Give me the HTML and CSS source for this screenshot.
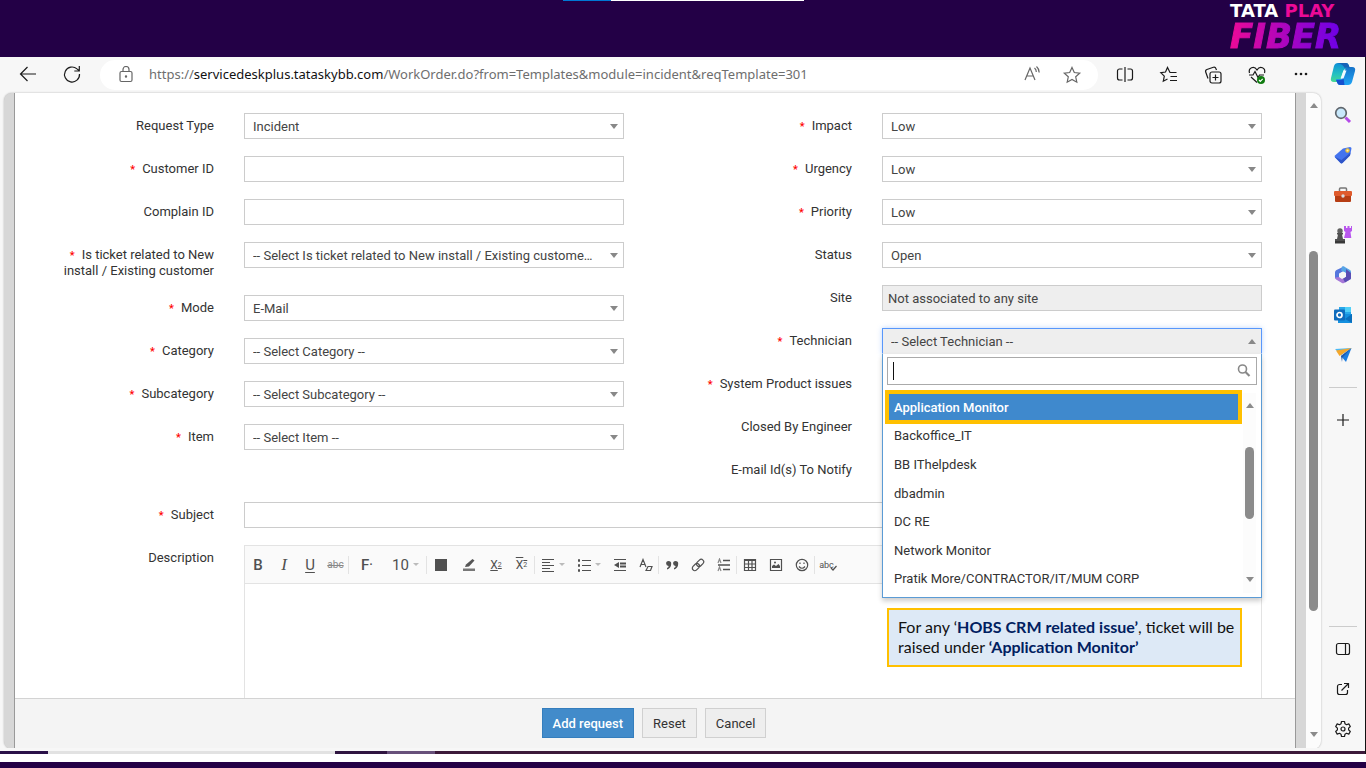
FILE: index.html
```html
<!DOCTYPE html>
<html lang="en">
  <head>
    <meta charset="UTF-8" />
    <meta name="viewport" content="width=device-width, initial-scale=1.0" />
    <title>ServiceDesk Plus - New Incident</title>
    <link rel="stylesheet" href="styles.css">
  </head>
  <body>
    <header class="banner">
      <div class="brand">
        <div class="brand-top">TATA <span>PLAY</span></div>
        <div class="brand-bottom">FIBER</div>
      </div>
    </header>

    <div class="browser">
      <nav class="toolbar">
        <button class="tool" aria-label="Back">
          <svg width="20" height="20" viewBox="0 0 20 20"><path d="M18 9H2.500M9.500 2 2.500 9l7 7" /></svg>
        </button>
        <button class="tool" aria-label="Refresh">
          <svg width="20" height="20" viewBox="0 0 20 20"><path d="M17.500 9A7.500 7.500 0 1 1 15 3.900L17 5.500M17.300 1v5h-5" /></svg>
        </button>
        <div class="address">
          <svg width="18" height="18" viewBox="0 0 18 18"><rect x="3" y="5.500" width="12" height="10" rx="1.500" /><path d="M6 5.500V3.500a3 3 0 0 1 6 0v2" /><circle cx="9" cy="10.500" r=".6" /></svg>
          <div class="url">https://<b>servicedeskplus.tataskybb.com</b>/WorkOrder.do?from=Templates&amp;module=incident&amp;reqTemplate=301</div>
          <button aria-label="Read aloud">
            <svg width="20" height="20" viewBox="0 0 20 20"><path d="M3 15 8 3l5 12M4.700 11h6.600M12.500 3a5 5 0 0 1 1.800 4M14.500 1.500a8 8 0 0 1 2.700 6" /></svg>
          </button>
          <button aria-label="Add to favorites">
            <svg width="20" height="20" viewBox="0 0 20 20"><path d="m10 2.500 2.300 5 5.400.6-4 3.700 1.100 5.400L10 14.500l-4.800 2.700 1.100-5.400-4-3.700 5.400-.6z" /></svg>
          </button>
        </div>
        <button class="tool" aria-label="Split screen">
          <svg width="20" height="20" viewBox="0 0 20 20"><path d="M7.500 4H4.500a2 2 0 0 0-2 2v7a2 2 0 0 0 2 2h3M12.500 4h3a2 2 0 0 1 2 2v7a2 2 0 0 1-2 2h-3M10 2v15" /></svg>
        </button>
        <button class="tool" aria-label="Favorites">
          <svg width="20" height="20" viewBox="0 0 20 20"><path d="M17.500 7.500H11L8.500 2.500 6.500 7l-4.700.7 3.500 3.500-1 5L8.500 14M11.500 11.500H18M11 15.500h7" /></svg>
        </button>
        <button class="tool" aria-label="Collections">
          <svg width="20" height="20" viewBox="0 0 20 20"><rect x="7" y="7" width="11" height="11" rx="2" /><path d="M12.500 9.500v6M9.500 12.500h6M5 13.500 2.700 7a2 2 0 0 1 1.200-2.500l6.500-2.200a2 2 0 0 1 2.500 1.200l.6 1.500" /></svg>
        </button>
        <button class="tool" aria-label="Browser essentials">
          <svg width="20" height="20" viewBox="0 0 20 20"><path d="M2.500 8C1 3 7 0 10 5c3-5 9-2 7.500 3M2 10h4l2-3.500 3 6 1.500-2.500H17M4 12l6 5.500" /><circle cx="14" cy="15" r="4" fill="#107c10" stroke="none" /><path d="m12 15 1.300 1.400 2.400-2.600" stroke="#fff" /></svg>
        </button>
        <button class="tool" aria-label="Settings and more">
          <svg width="20" height="20" viewBox="0 0 20 20"><g fill="#1b1b1b" stroke="none"><circle cx="5" cy="9" r="1.300" /><circle cx="10" cy="9" r="1.300" /><circle cx="15" cy="9" r="1.300" /></g></svg>
        </button>
        <button class="tool copilot" aria-label="Copilot">
          <svg width="26" height="26" viewBox="0 0 26 26">
            <defs>
              <linearGradient id="cp1" x1="0" y1="0" x2="0" y2="1"><stop offset="0" stop-color="#0d8ed8" /><stop offset=".6" stop-color="#25c2c0" /><stop offset="1" stop-color="#48d991" /></linearGradient>
              <linearGradient id="cp2" x1="0" y1="0" x2="0" y2="1"><stop offset="0" stop-color="#1673c9" /><stop offset="1" stop-color="#20a4f5" /></linearGradient>
            </defs>
            <g stroke="none">
              <path d="M8 1h8q2 0 2.700 2L20 7h-4q-2 0-2.700 2L11 17q-1 3-4 3H4q-4 0-3-4L4 4q1-3 4-3z" fill="url(#cp1)" />
              <path d="M18 23h-8q-2 0-2.700-2L6 17h4q2 0 2.700-2L15 8q1-3 4-3h3q4 0 3 4l-3 11q-1 3-4 3z" fill="url(#cp2)" />
              <path d="M8 1h8q2 0 2.700 2l1 3q-3-1-5 0-2-4-7-5z" fill="#1762b7" />
              <path d="M6 18h5q2 0 2.500-2l1 7H10q-2 0-2.700-2z" fill="#1650cf" />
              <path d="M13.500 8.500h3l-3 8h-3z" fill="#f2fbff" />
            </g>
          </svg>
        </button>
      </nav>

      <div class="workspace">
        <div class="page">
          <main class="content">
            <form class="request-form" id="requestForm">
              <div class="columns">
                <div class="column column-left">
                  <div class="row">
                    <label for="requestType">Request Type</label>
                    <div class="select"><select id="requestType"><option>Incident</option></select></div>
                  </div>
                  <div class="row">
                    <label for="customerId" class="required">Customer ID</label>
                    <input type="text" id="customerId" />
                  </div>
                  <div class="row">
                    <label for="complainId">Complain ID</label>
                    <input type="text" id="complainId" />
                  </div>
                  <div class="row">
                    <label for="ticketRelated" class="required">Is ticket related to New install / Existing customer</label>
                    <div class="select"><select id="ticketRelated"><option>-- Select Is ticket related to New install / Existing customer --</option></select></div>
                  </div>
                  <div class="row">
                    <label for="mode" class="required">Mode</label>
                    <div class="select"><select id="mode"><option>E-Mail</option></select></div>
                  </div>
                  <div class="row">
                    <label for="category" class="required">Category</label>
                    <div class="select"><select id="category"><option>-- Select Category --</option></select></div>
                  </div>
                  <div class="row">
                    <label for="subcategory" class="required">Subcategory</label>
                    <div class="select"><select id="subcategory"><option>-- Select Subcategory --</option></select></div>
                  </div>
                  <div class="row">
                    <label for="item" class="required">Item</label>
                    <div class="select"><select id="item"><option>-- Select Item --</option></select></div>
                  </div>
                </div>

                <div class="column column-right">
                  <div class="row">
                    <label for="impact" class="required">Impact</label>
                    <div class="select"><select id="impact"><option>Low</option></select></div>
                  </div>
                  <div class="row">
                    <label for="urgency" class="required">Urgency</label>
                    <div class="select"><select id="urgency"><option>Low</option></select></div>
                  </div>
                  <div class="row">
                    <label for="priority" class="required">Priority</label>
                    <div class="select"><select id="priority"><option>Low</option></select></div>
                  </div>
                  <div class="row">
                    <label for="status">Status</label>
                    <div class="select"><select id="status"><option>Open</option></select></div>
                  </div>
                  <div class="row">
                    <label for="site">Site</label>
                    <input type="text" id="site" class="readonly" value="Not associated to any site" readonly />
                  </div>
                  <div class="row">
                    <label for="technician" class="required">Technician</label>
                    <div class="select open">
                      <select id="technician"><option>-- Select Technician --</option></select>
                      <div class="dropdown">
                        <div class="search">
                          <input type="text" aria-label="Search technician" />
                          <svg width="14" height="14" viewBox="0 0 14 14"><circle cx="5.500" cy="5" r="4" /><path d="m8.500 8 4 4" stroke-width="2.200" /></svg>
                        </div>
                        <div class="list">
                          <ul>
                            <li class="selected">Application Monitor</li>
                            <li>Backoffice_IT</li>
                            <li>BB IThelpdesk</li>
                            <li>dbadmin</li>
                            <li>DC RE</li>
                            <li>Network Monitor</li>
                            <li>Pratik More/CONTRACTOR/IT/MUM CORP</li>
                          </ul>
                          <div class="list-scroll">
                            <span class="up"></span>
                            <span class="thumb"></span>
                            <span class="down"></span>
                          </div>
                        </div>
                      </div>
                      <div class="callout">For any ‘<b>HOBS CRM related issue’</b>, ticket will be raised under <b>‘Application Monitor’</b></div>
                    </div>
                  </div>
                  <div class="row">
                    <label for="productIssues" class="required">System Product issues</label>
                    <input type="text" id="productIssues" />
                  </div>
                  <div class="row">
                    <label for="closedBy">Closed By Engineer</label>
                    <input type="text" id="closedBy" />
                  </div>
                  <div class="row">
                    <label for="emailNotify">E-mail Id(s) To Notify</label>
                    <input type="text" id="emailNotify" />
                  </div>
                </div>
              </div>

              <div class="row">
                <label for="subject" class="required">Subject</label>
                <input type="text" id="subject" />
              </div>

              <div class="row description">
                <label for="description">Description</label>
                <div class="editor">
                  <div class="editor-bar">
                    <button type="button" class="bold" aria-label="Bold">B</button>
                    <button type="button" class="italic" aria-label="Italic">I</button>
                    <button type="button" class="underline" aria-label="Underline">U</button>
                    <button type="button" class="strike sep" aria-label="Strikethrough">abc</button>
                    <button type="button" class="bold wide" aria-label="Font">F<small>·</small></button>
                    <button type="button" class="size sep" aria-label="Font size">10<span class="caret"></span></button>
                    <button type="button" class="color" aria-label="Text color">
                      <svg width="14" height="14" viewBox="0 0 14 14"><path d="M1 1h12v12H1z" fill="#505050" stroke="none" /></svg>
                    </button>
                    <button type="button" class="color" aria-label="Highlight">
                      <svg width="14" height="14" viewBox="0 0 14 14"><path d="M1 10.500h12v2.500H1z" fill="#777" stroke="none" /><path d="M3 9 4 6.500 10.500 1l2 1.500L7 8.500z" fill="#555" stroke="none" /></svg>
                    </button>
                    <button type="button" class="script sub" aria-label="Subscript">X<sub>2</sub></button>
                    <button type="button" class="script sup sep" aria-label="Superscript">X<sup>2</sup></button>
                    <button type="button" class="wide" aria-label="Align">
                      <svg width="14" height="14" viewBox="0 0 14 14"><path d="M1 1.500h12M1 4.500h8M1 7.500h12M1 10.500h8M1 13.500h12" /></svg><span class="caret"></span>
                    </button>
                    <button type="button" class="wide" aria-label="List">
                      <svg width="14" height="14" viewBox="0 0 14 14"><path d="M5 2.500h9M5 7.500h9M5 12.500h9" /><path d="M1 2.500h2M1 7.500h2M1 12.500h2" stroke-width="2.500" /></svg><span class="caret"></span>
                    </button>
                    <button type="button" aria-label="Indent">
                      <svg width="14" height="14" viewBox="0 0 14 14"><path d="M1 1.500h12M1 12.500h12" /><path d="M7 5.500h6M7 8.500h6" stroke-width="2" /><path d="M1 7l5-3v6z" fill="#505050" stroke="none" /></svg>
                    </button>
                    <button type="button" class="sep" aria-label="Clear formatting">
                      <svg width="14" height="14" viewBox="0 0 14 14"><path d="M1 9 4 1.500 7 9M2 6.500h4M7 12.500l2-4h4l-1.500 4H7z" /></svg>
                    </button>
                    <button type="button" aria-label="Quote">
                      <svg width="14" height="14" viewBox="0 0 14 14"><path d="M3.500 3a2.700 2.700 0 0 1 2.700 2.800C6.200 9 4.500 11 2 11.500V10q1.500-.5 1.700-2A2.500 2.500 0 0 1 3.500 3zM10.500 3a2.700 2.700 0 0 1 2.700 2.800C13.200 9 11.500 11 9 11.500V10q1.500-.5 1.700-2a2.500 2.500 0 0 1-.2-5z" fill="#505050" stroke="none" /></svg>
                    </button>
                    <button type="button" aria-label="Link">
                      <svg width="14" height="14" viewBox="0 0 14 14"><g transform="rotate(-45 7 7)"><rect x="0" y="4.500" width="8" height="5" rx="2.500" /><rect x="6" y="4.500" width="8" height="5" rx="2.500" /></g></svg>
                    </button>
                    <button type="button" class="sep" aria-label="Line height">
                      <svg width="14" height="14" viewBox="0 0 14 14"><path d="m1 5 1.500-4L4 5M1 13l1.500-4L4 13" stroke="#888" /><path d="M6 2.500h7M1 7h12M6 11.500h7" stroke-width="1.500" /></svg>
                    </button>
                    <button type="button" aria-label="Table">
                      <svg width="14" height="14" viewBox="0 0 14 14"><path d="M1.500 1.500h11v11h-11zM5.500 2v11M9 2v11M1.500 6h11M1.500 9.500h11" /><path d="M1 2h12" stroke-width="2" /></svg>
                    </button>
                    <button type="button" aria-label="Image">
                      <svg width="14" height="14" viewBox="0 0 14 14"><path d="M1.500 1.500h11v11h-11z" /><path d="M3 10V8l2-1.500 2 1.500 2.500-2 1.500 2v2z" fill="#505050" stroke="none" /><circle cx="6" cy="4.500" r="1" fill="#505050" stroke="none" /></svg>
                    </button>
                    <button type="button" class="sep" aria-label="Emoji">
                      <svg width="14" height="14" viewBox="0 0 14 14"><circle cx="7" cy="7" r="5.700" /><path d="M4 8.500q3 3.500 6 0M5 4.500v1.500M9 4.500v1.500" /></svg>
                    </button>
                    <button type="button" class="spell" aria-label="Spell check">abc
                      <svg width="7" height="6" viewBox="0 0 7 6"><path d="m1 3 2 2 3.500-4" /></svg>
                    </button>
                  </div>
                  <textarea id="description"></textarea>
                </div>
              </div>
            </form>

            <div class="actions">
              <button type="submit" form="requestForm" class="primary">Add request</button>
              <button type="reset" form="requestForm">Reset</button>
              <button type="button">Cancel</button>
            </div>
          </main>

          <div class="page-scroll">
            <span class="up"></span>
            <span class="track-top"></span>
            <span class="thumb"></span>
            <span class="track-bottom"></span>
            <span class="down"></span>
          </div>
        </div>

        <aside class="sidebar">
          <button aria-label="Search">
            <svg width="18" height="18" viewBox="0 0 18 18"><path d="m11.500 11.500 4.500 4.500" stroke="#b44be8" stroke-width="3" /><circle cx="7" cy="7" r="5.300" fill="#c8e8fb" stroke="#5f666d" stroke-width="1.700" /></svg>
          </button>
          <button aria-label="Shopping">
            <svg width="18" height="18" viewBox="0 0 18 18"><path d="M9 2.500 16 1q1.500 0 1.500 1.500L16 9.500 8.500 17q-1 .8-2 0L1 11.500q-.8-1 0-2z" fill="#4474ee" stroke="none" /><path d="M1 11 6.500 17q1 .8 2 0L16 9.500l.5-3L7.500 14z" fill="#2f55c8" stroke="none" /><circle cx="13.500" cy="4.500" r="1.600" fill="#fff3b0" stroke="#f2c230" /></svg>
          </button>
          <button aria-label="Tools">
            <svg width="18" height="18" viewBox="0 0 18 18"><path d="M5.500 5V3q0-1 1-1h5q1 0 1 1v2" stroke="#777" stroke-width="1.500" /><rect y="5" width="18" height="5" rx="1" fill="#df5b2d" stroke="none" /><path d="M1 10h16v5q0 1-1 1H2q-1 0-1-1z" fill="#b63d14" stroke="none" /><circle cx="9" cy="10" r="1.700" fill="#d9dde0" stroke="none" /></svg>
          </button>
          <button aria-label="Games">
            <svg width="18" height="18" viewBox="0 0 18 18"><g stroke="none"><path d="M10 0h2v2h1.500V0h2v2H17V0h1v5l-1.500 1 .8 6H10l1.500-6L10 5z" fill="#b957ee" /><circle cx="6" cy="5" r="2.700" fill="#606060" /><path d="M3 7h6v1.500H8L9 13h2v4H1v-4h2l1-4.500H3z" fill="#505050" /><path d="M1 15h10v2.500H1z" fill="#383838" /></g></svg>
          </button>
          <button aria-label="Microsoft 365">
            <svg width="18" height="18" viewBox="0 0 18 18"><g stroke="none"><path d="M10 .5 2.500 4Q1 4.700 1 6.500V12l4 2.500V7.500L12 4z" fill="#5577dd" /><path d="M1 11.500q0 1.500 1.500 2.300L8 17q1 .7 2 0l6-3.500-4-3-4 2.500-3-2z" fill="#a678d8" /><path d="M8 .5q1-.7 2 0L16 4q1 .7 1 2v6q0 1-1 1.500l-4-3V7L7 4.500z" fill="#56a5e6" /><path d="M12 5.500V3l5 4v5q0 1-1 1.500l-5 3-2-4 3-2z" fill="#5a4db4" /><path d="M9 5.500 12 7.200v3.600l-3 1.700-3-1.700V7.200z" fill="#f7f7f7" /></g></svg>
          </button>
          <button aria-label="Outlook">
            <svg width="18" height="18" viewBox="0 0 18 18"><g stroke="none"><path d="M5 1h12v8H5z" fill="#28a8ea" /><path d="M11 1h6v5h-6z" fill="#50d0f8" /><path d="M4 8h14v9H4z" fill="#1490df" /><path d="m18 8-7 5 7 4z" fill="#0a6fbd" /><rect y="3.500" width="11" height="11" rx="1" fill="#0f6cbd" /></g><circle cx="5.500" cy="9" r="2.500" stroke="#fff" stroke-width="1.700" /></svg>
          </button>
          <button aria-label="Drop">
            <svg width="18" height="18" viewBox="0 0 18 18"><g stroke="none"><path d="M1 3 17.500 2 7 9z" fill="#4ab9f5" /><path d="M17.500 2 12 16 7 10z" fill="#1c7de0" /><path d="M2 4.500 17.500 2 5.500 10z" fill="#f5a72a" /><path d="M7 10 17.500 2 8.500 11.500 8 16z" fill="#2558a8" /></g></svg>
          </button>
          <hr />
          <button aria-label="Customize">
            <svg width="16" height="16" viewBox="0 0 16 16"><path d="M8 2v12M2 8h12" /></svg>
          </button>
          <div class="sidebar-bottom">
            <hr />
            <button aria-label="Hide sidebar">
              <svg width="16" height="16" viewBox="0 0 16 16"><rect x="1.500" y="2.500" width="13" height="11" rx="2" /><path d="M10.500 2.500v11" /></svg>
            </button>
            <button aria-label="Open in new window">
              <svg width="16" height="16" viewBox="0 0 16 16"><path d="M7 3.500H4.500a2 2 0 0 0-2 2v6a2 2 0 0 0 2 2h6a2 2 0 0 0 2-2V9M9 2.500h4.500V7M13.500 2.500 6.500 9.500" /></svg>
            </button>
            <button aria-label="Settings">
              <svg width="18" height="18" viewBox="0 0 18 18"><path d="M7.500 1.500h3l.5 2.300 1.500.9 2.300-.8 1.500 2.600-1.700 1.600v1.800l1.700 1.600-1.500 2.600-2.300-.8-1.500.9-.5 2.300h-3L7 14.200l-1.500-.9-2.300.8-1.500-2.600 1.700-1.600V8.100L1.700 6.500l1.500-2.600 2.300.8L7 3.800z" stroke-linejoin="round" /><circle cx="9" cy="9" r="2" /></svg>
            </button>
          </div>
        </aside>
      </div>
      <div class="browser-edge"></div>
    </div>
    <footer class="base"></footer>
  </body>
</html>
```

FILE: styles.css
```css
* {
  box-sizing: border-box;
}
body {
  margin: 0;
  height: 100vh;
  display: flex;
  flex-direction: column;
  overflow: hidden;
  font-family: Roboto, "Liberation Sans", sans-serif;
  font-size: 13px;
  color: #333;
  background: #fff;
}
button {
  font: inherit;
  color: inherit;
  margin: 0;
  padding: 0;
  border: none;
  background: none;
  cursor: pointer;
}
svg {
  display: block;
  flex: none;
  fill: none;
  stroke: #1b1b1b;
  stroke-width: 1.2;
}

/* banner */
.banner {
  flex: none;
  height: 57px;
  padding: 1px 24px 0 0;
  display: flex;
  justify-content: flex-end;
  background: linear-gradient(90deg, #0078d4 20%, #fff 20%) 50% 0 / 241px 1px no-repeat, #230046;
}
.brand {
  width: 112px;
  font-family: "DejaVu Sans", sans-serif;
  font-weight: 700;
  white-space: nowrap;
}
.brand-top {
  font-size: 18px;
  line-height: 20px;
  color: #fff;
}
.brand-top span {
  color: #ec0a97;
}
.brand-bottom {
  font-size: 34px;
  line-height: 30px;
  font-style: italic;
  color: transparent;
  -webkit-text-stroke: 1px transparent;
  background: linear-gradient(90deg, #ec0a97, #6a00e8);
  background-clip: text;
  -webkit-background-clip: text;
}

/* browser frame */
.browser {
  flex: 1;
  min-height: 0;
  display: flex;
  flex-direction: column;
  background: #f7f7f7;
  border-right: 1px solid #111;
}
.toolbar {
  flex: none;
  height: 36px;
  padding: 0 2px 0 6px;
  display: flex;
  align-items: center;
}
.tool {
  width: 44px;
  display: flex;
  justify-content: center;
}
.copilot {
  width: 40px;
}
.address {
  flex: 1;
  height: 30px;
  margin: 0 5px 0 6px;
  padding: 0 16px 0 17px;
  display: flex;
  align-items: center;
  border-radius: 15px;
  background: #fff;
}
.address svg {
  stroke: #666;
}
.address button {
  margin-left: 20px;
}
.url {
  flex: 1;
  margin-left: 14px;
  padding-bottom: 2px;
  font-family: "Noto Sans", "Open Sans", sans-serif;
  font-size: 13px;
  color: #6e6e6e;
  white-space: nowrap;
}
.url b {
  font-weight: 400;
  color: #111;
}
.workspace {
  flex: 1;
  min-height: 0;
  display: flex;
  padding-left: 4px;
}
.page {
  flex: 1;
  min-width: 0;
  display: flex;
  padding-left: 10px;
  border-radius: 8px;
  overflow: hidden;
  background: #d7d7d7;
  box-shadow: 0 0 2px rgba(0, 0, 0, 0.3);
}
.content {
  flex: 1;
  min-width: 0;
  margin-right: 10px;
  display: flex;
  flex-direction: column;
  border-left: 1px solid #999;
  border-right: 1px solid #999;
  background: #fff;
}

/* scrollbars */
.page-scroll {
  width: 15px;
  padding: 10px 0 12px;
  display: flex;
  flex-direction: column;
  align-items: center;
  background: #fcfcfc;
}
.up {
  border: 4px solid transparent;
  border-top: none;
  border-bottom: 5px solid #8b8b8b;
}
.down {
  border: 4px solid transparent;
  border-bottom: none;
  border-top: 5px solid #8b8b8b;
}
.thumb {
  width: 9px;
  border-radius: 5px;
  background: #8b8b8b;
}
.page-scroll .thumb {
  flex: 359;
}
.track-top {
  flex: 143;
}
.track-bottom {
  flex: 121;
}

/* request form */
.request-form {
  flex: 1;
  min-height: 0;
  display: flex;
  flex-direction: column;
  padding: 20px 33px 0 0;
}
.columns {
  flex: none;
  display: grid;
  grid-template-columns: 609fr 638fr;
  margin-bottom: 2px;
}
.row {
  display: grid;
  grid-template-columns: 199px 1fr;
  column-gap: 30px;
  align-items: start;
  margin-bottom: 17px;
}
.column-right .row {
  grid-template-columns: 228px 1fr;
}
.row label {
  margin-bottom: -1px;
  padding: 5px 0 0 40px;
  line-height: 16px;
  text-align: right;
}
.required::before {
  content: "*";
  margin-right: 7px;
  font-size: 11px;
  font-weight: 500;
  line-height: 1;
  color: #f00;
}
.row input,
.select select {
  width: 100%;
  height: 26px;
  padding: 0 5px;
  border: 1px solid #ccc;
  border-radius: 0;
  outline: none;
  background: #fff;
  font: inherit;
  color: #444;
}
.row .readonly {
  background: #eee;
}
.select {
  position: relative;
}
.select select {
  display: block;
  padding: 0 30px 0 8px;
  appearance: none;
  text-overflow: ellipsis;
}
.select::after {
  content: "";
  position: absolute;
  top: 11px;
  right: 6px;
  border: 4px solid transparent;
  border-top: 5px solid #888;
  border-bottom: none;
}

/* technician list */
.select.open select {
  background: #eee;
  border-color: #5897fb #5897fb #eee;
  box-shadow: 0 0 5px rgba(88, 151, 251, 0.4);
}
.select.open::after {
  border-top: none;
  border-bottom: 5px solid #888;
}
.dropdown {
  position: absolute;
  z-index: 2;
  top: 26px;
  left: 0;
  right: 0;
  padding: 3px 4px;
  border: 1px solid #5b9bd5;
  border-top: none;
  background: #fff;
  box-shadow: 0 3px 5px rgba(0, 0, 0, 0.2);
}
.search {
  height: 28px;
  padding: 0 5px 0 0;
  display: flex;
  align-items: center;
  border: 1px solid #aaa;
}
.search::before {
  content: "";
  width: 1px;
  height: 18px;
  margin-left: 5px;
  background: #111;
}
.row .search input {
  flex: 1;
  min-width: 0;
  height: 24px;
  border: none;
}
.search svg {
  stroke: #888;
  stroke-width: 1.6;
}
.list {
  height: 209px;
  padding: 8px 1px 1px;
  display: flex;
}
.list ul {
  flex: 1;
  margin: 0;
  padding: 0;
  display: flex;
  flex-direction: column;
  list-style: none;
}
.list li {
  flex: 1;
  padding-left: 6px;
  display: flex;
  align-items: center;
}
.list .selected {
  position: relative;
  background: #3f89cd;
  color: #fff;
  font-weight: 500;
}
.selected::after {
  content: "";
  position: absolute;
  inset: -3px -3px -2px;
  border: 4px solid #ffc000;
}
.list-scroll {
  width: 13px;
  margin-left: 4px;
  padding: 10px 0 11px;
  display: flex;
  flex-direction: column;
  align-items: center;
  justify-content: space-between;
  background: #fcfcfc;
}
.list-scroll .thumb {
  height: 72px;
  margin-bottom: 20px;
}
.callout {
  position: absolute;
  z-index: 2;
  top: 280px;
  left: 5px;
  right: 20px;
  padding: 7px 0 8px 9px;
  border: 2px solid #ffc000;
  background: #dde9f6;
  font-family: Lato, "Liberation Sans", sans-serif;
  font-size: 16px;
  line-height: 20px;
  color: #111;
}
.callout b {
  color: #002060;
}

/* editor */
.description {
  flex: 1;
  min-height: 0;
  margin-bottom: 0;
  align-items: stretch;
}
.editor {
  display: flex;
  flex-direction: column;
  border: 1px solid #e3e3e3;
  border-bottom: none;
}
.editor-bar {
  flex: none;
  height: 38px;
  display: flex;
  align-items: center;
  border-bottom: 1px solid #e3e3e3;
  background: #fafafa;
}
.editor-bar button {
  width: 26px;
  height: 18px;
  display: flex;
  align-items: center;
  justify-content: center;
  font-size: 15px;
  color: #505050;
}
.editor-bar svg {
  stroke: #505050;
}
.editor-bar .sep {
  border-right: 1px solid #e3e3e3;
}
.editor-bar .bold {
  font-weight: 500;
}
.editor-bar .italic {
  font-family: "Liberation Serif", serif;
  font-style: italic;
  font-size: 17px;
}
.editor-bar .underline {
  text-decoration: underline;
  text-underline-offset: 2px;
}
.editor-bar .strike {
  font-size: 10px;
  color: #888;
  text-decoration: line-through;
}
.editor-bar .wide {
  width: 36px;
}
.editor-bar .size {
  width: 42px;
}
.editor-bar .color {
  width: 28px;
}
.editor-bar .script {
  font-size: 12px;
}
.script sub,
.script sup {
  font-size: 7px;
}
.sub {
  text-decoration: underline;
}
.sup {
  text-decoration: overline;
}
.editor-bar .spell {
  font-size: 9px;
}
.spell svg {
  margin: 7px 0 0 -4px;
}
.caret {
  margin-left: 4px;
  border: 3px solid transparent;
  border-top-color: #bbb;
  border-bottom: none;
}
.editor textarea {
  flex: 1;
  width: 100%;
  padding: 8px;
  border: none;
  outline: none;
  resize: none;
  font: inherit;
}
.actions {
  flex: none;
  height: 51px;
  padding: 0 2px 2px 0;
  display: flex;
  align-items: center;
  justify-content: center;
  gap: 8px;
  border-top: 1px solid #d3d3d3;
  background: #f4f4f4;
}
.actions button {
  height: 30px;
  padding: 0 10px;
  border: 1px solid #d0d0d0;
  background: #eee;
}
.actions .primary {
  border-color: #357ebd;
  background: #428bca;
  color: #fff;
  font-weight: 500;
}

/* sidebar */
.sidebar {
  width: 44px;
  padding-top: 2px;
  display: flex;
  flex-direction: column;
  align-items: center;
}
.sidebar button {
  flex: none;
  width: 40px;
  height: 40px;
  display: flex;
  align-items: center;
  justify-content: center;
}
.sidebar hr {
  flex: none;
  width: 28px;
  height: 1px;
  margin: 12px 0;
  border: none;
  background: #ccc;
}
.sidebar-bottom {
  margin-top: auto;
  display: flex;
  flex-direction: column;
  align-items: center;
}
.sidebar-bottom hr {
  margin-bottom: 2px;
}

/* bottom edge */
.browser-edge {
  flex: none;
  height: 6px;
  margin-top: -1px;
  border-top: 3px solid #f7f7f7;
  background: linear-gradient(90deg, #2a1048 48px, #e2e2e2 48px, #e2e2e2 335px, #2f1540 335px, #2f1540 387px, #67507a 387px, #67507a 435px, #3c1a3a 435px);
}
.base {
  flex: none;
  height: 14px;
  border-top: 8px solid #fff;
  background: #230046;
}
```
